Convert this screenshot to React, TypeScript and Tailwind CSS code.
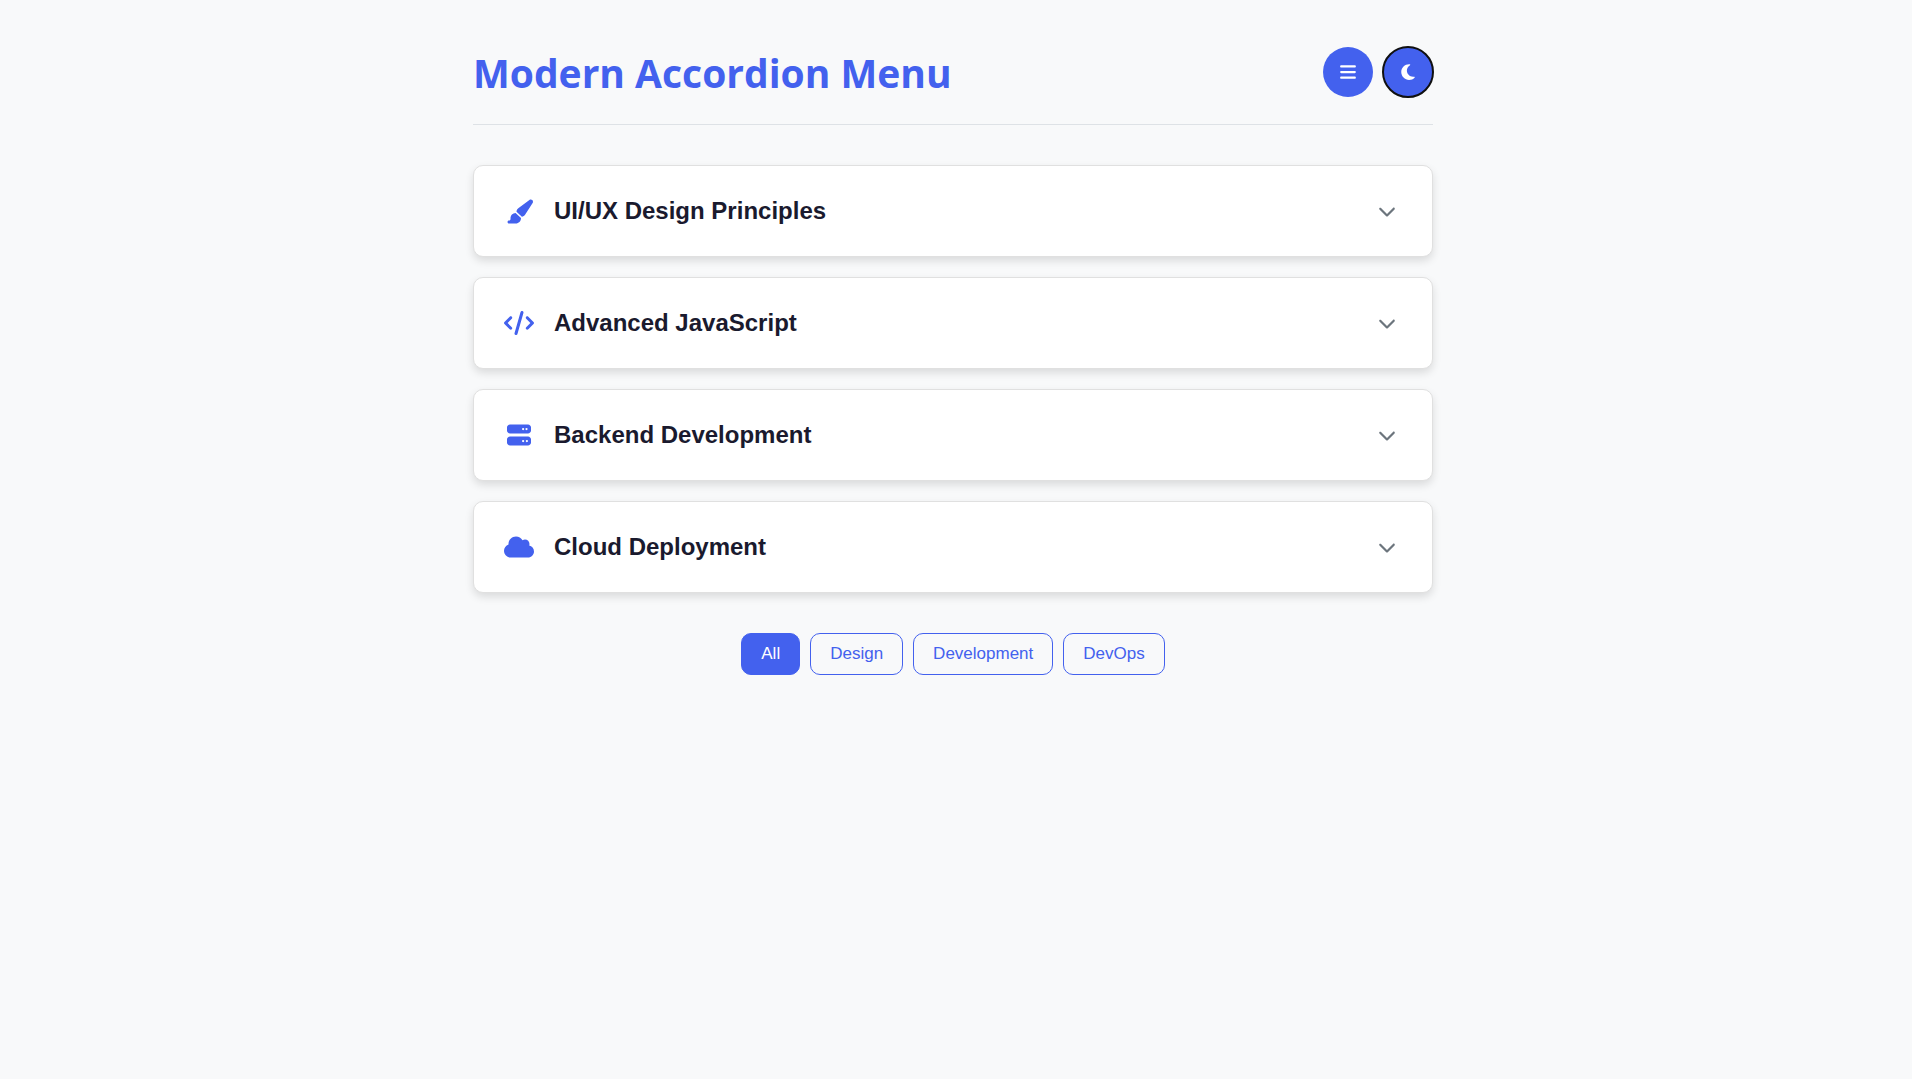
import React, { useState } from 'react';
import { FaBars, FaChevronDown, FaCloud, FaCode, FaMoon, FaPaintbrush, FaServer, FaSun } from 'react-icons/fa6';

const sections = [
  {
    id: 'design',
    title: 'UI/UX Design Principles',
    category: 'Design',
    icon: FaPaintbrush,
    iconSize: 27
  },
  {
    id: 'javascript',
    title: 'Advanced JavaScript',
    category: 'Development',
    icon: FaCode,
    iconSize: 30
  },
  {
    id: 'backend',
    title: 'Backend Development',
    category: 'Development',
    icon: FaServer,
    iconSize: 24
  },
  {
    id: 'cloud',
    title: 'Cloud Deployment',
    category: 'DevOps',
    icon: FaCloud,
    iconSize: 30
  }
];

const filters = ['All', 'Design', 'Development', 'DevOps'];

const App: React.FC = () => {
  const [filter, setFilter] = useState('All');
  const [openIds, setOpenIds] = useState<string[]>([]);
  const [dark, setDark] = useState(false);

  const visible = sections.filter(s => filter === 'All' || s.category === filter);

  const toggleItem = (id: string) => {
    setOpenIds(prev => (prev.includes(id) ? prev.filter(x => x !== id) : [...prev, id]));
  };

  const toggleAll = () => {
    setOpenIds(prev => (prev.length ? [] : sections.map(s => s.id)));
  };

  return (
    <div className={`min-h-screen pr-1.5 ${dark ? 'bg-[#121212]' : 'bg-[#f8f9fa]'}`}>
      <div className="max-w-[1000px] mx-auto px-5 py-10">
        <header className="flex items-center justify-between pb-5 mb-10 border-b border-[#dee2e6]">
          <h1 className="pt-0.5 text-[39px] leading-[62px] font-bold text-[#4361ee] font-['Segoe_UI','Open_Sans',sans-serif]">
            Modern Accordion Menu
          </h1>
          <div className="flex gap-2.5">
            <button
              aria-label="Toggle all"
              onClick={toggleAll}
              className="size-[50px] rounded-full bg-[#4361ee] text-white flex items-center justify-center"
            >
              <FaBars size={18} />
            </button>
            <button
              aria-label="Toggle theme"
              onClick={() => setDark(!dark)}
              className="size-[50px] rounded-full bg-[#4361ee] text-white flex items-center justify-center outline-2 -outline-offset-1 outline-[#101010]"
            >
              {dark ? <FaSun size={18} /> : <FaMoon size={18} />}
            </button>
          </div>
        </header>

        <main className="flex flex-col gap-5 font-['Liberation_Sans',Arial,sans-serif]">
          {visible.map(({ id, title, category, icon: Icon, iconSize }) => (
            <section
              key={id}
              className="rounded-[10px] border border-[#e0e0e0] bg-white overflow-hidden shadow-[0_4px_8px_rgba(0,0,0,0.12)]"
            >
              <button
                aria-expanded={openIds.includes(id)}
                onClick={() => toggleItem(id)}
                className="w-full h-[90px] pl-[30px] pr-9 flex items-center justify-between text-left"
              >
                <span className="flex items-center gap-5">
                  <span className="w-[30px] flex justify-center text-[#4361ee]">
                    <Icon size={iconSize} />
                  </span>
                  <span className="text-2xl font-bold text-[#1a1a2e]">{title}</span>
                </span>
                <FaChevronDown size={18} className={`text-[#6c757d] ${openIds.includes(id) ? 'rotate-180' : ''}`} />
              </button>
              {openIds.includes(id) && <p className="px-[30px] pb-6 text-[#6c757d]">{category}</p>}
            </section>
          ))}
        </main>

        <div className="flex justify-center gap-2.5 mt-10 font-['Liberation_Sans',Arial,sans-serif]">
          {filters.map(name => (
            <button
              key={name}
              onClick={() => setFilter(name)}
              className={`px-[19px] py-2.5 text-[17px] leading-5 rounded-[10px] border border-[#4361ee] ${
                filter === name ? 'bg-[#4361ee] text-white' : 'text-[#4361ee]'
              }`}
            >
              {name}
            </button>
          ))}
        </div>
      </div>
    </div>
  );
};

export default App;
